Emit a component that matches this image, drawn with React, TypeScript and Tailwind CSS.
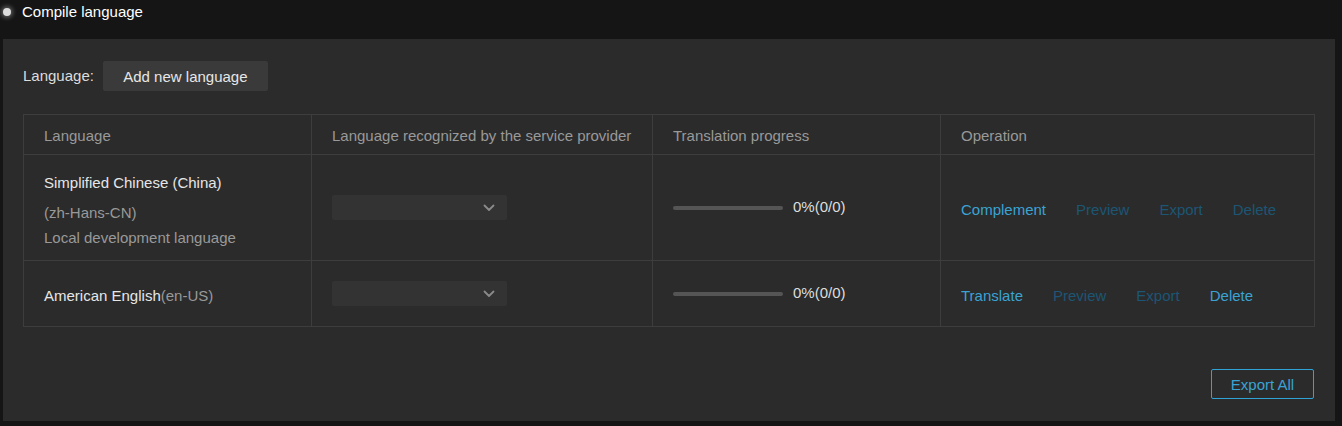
import React from "react";

const Chevron = () => (
  <svg width="12" height="8" viewBox="0 0 12 8" fill="none">
    <path d="M1.5 1.5 L6 6 L10.5 1.5" stroke="#8a8a8a" strokeWidth="1.8" strokeLinecap="round" strokeLinejoin="round" />
  </svg>
);

const Select = () => (
  <div className="w-[175px] h-[25px] bg-[#333333] rounded-[2px] flex items-center justify-end pr-[12px]">
    <Chevron />
  </div>
);

const Progress = () => (
  <div className="flex items-center">
    <div className="w-[110px] h-[4px] rounded-full bg-[#555555]" />
    <span className="ml-[10px] text-[#dddddd]">0%(0/0)</span>
  </div>
);

export default function App() {
  return (
    <div
      className="w-[1342px] h-[426px] bg-[#151515] text-[15px] overflow-hidden"
      style={{ fontFamily: '"Liberation Sans", Arial, sans-serif' }}
    >
      <div className="h-[39px] flex items-start pt-[3px] pl-[3px]">
        <div className="flex items-center h-[18px]">
          <div className="w-[8px] h-[8px] rounded-full bg-[#dcdcdc] shadow-[0_0_4px_2px_rgba(255,255,255,0.3)]" />
          <span className="ml-[11px] text-white text-[15px]">Compile language</span>
        </div>
      </div>
      <div className="ml-[3px] w-[1332px] h-[382px] bg-[#2b2b2b] pt-[22px] px-[20px]">
        <div className="flex items-center h-[30px]">
          <span className="text-[#dddddd]">Language:</span>
          <div className="ml-[9px] h-[30px] w-[165px] bg-[#3a3a3a] rounded-[2px] flex items-center justify-center text-[#e6e6e6] text-[15px] pt-[2px]">
            Add new language
          </div>
        </div>
        <table className="mt-[23px] w-[1291px] border-collapse border border-[#3d3d3d] table-fixed">
          <colgroup>
            <col className="w-[288px]" />
            <col className="w-[341px]" />
            <col className="w-[288px]" />
            <col className="w-[374px]" />
          </colgroup>
          <thead>
            <tr className="h-[40px] text-[#999999] text-left">
              <th className="font-normal px-[20px] pt-[4px] border border-[#3d3d3d]">Language</th>
              <th className="font-normal px-[20px] pt-[4px] border border-[#3d3d3d]">Language recognized by the service provider</th>
              <th className="font-normal px-[20px] pt-[4px] border border-[#3d3d3d]">Translation progress</th>
              <th className="font-normal px-[20px] pt-[4px] border border-[#3d3d3d]">Operation</th>
            </tr>
          </thead>
          <tbody>
            <tr className="h-[106px]">
              <td className="px-[20px] border border-[#3d3d3d] align-middle">
                <div className="flex flex-col mt-[6px]">
                  <span className="text-[#e6e6e6] leading-[18px]">Simplified Chinese (China)</span>
                  <span className="text-[#999999] leading-[18px] mt-[12px]">(zh-Hans-CN)</span>
                  <span className="text-[#999999] leading-[18px] mt-[7px]">Local development language</span>
                </div>
              </td>
              <td className="px-[20px] border border-[#3d3d3d]">
                <Select />
              </td>
              <td className="px-[20px] border border-[#3d3d3d]">
                <Progress />
              </td>
              <td className="px-[20px] border border-[#3d3d3d]">
                <div className="flex items-center gap-[30px] mt-[6px]">
                  <span className="text-[#3aa3d4]">Complement</span>
                  <span className="text-[#1c5674]">Preview</span>
                  <span className="text-[#1c5674]">Export</span>
                  <span className="text-[#1c5674]">Delete</span>
                </div>
              </td>
            </tr>
            <tr className="h-[66px]">
              <td className="px-[20px] border border-[#3d3d3d] pt-[5px]">
                <span className="text-[#e6e6e6]">American English</span>
                <span className="text-[#999999]">(en-US)</span>
              </td>
              <td className="px-[20px] border border-[#3d3d3d]">
                <Select />
              </td>
              <td className="px-[20px] border border-[#3d3d3d]">
                <Progress />
              </td>
              <td className="px-[20px] border border-[#3d3d3d]">
                <div className="flex items-center gap-[30px] mt-[5px]">
                  <span className="text-[#3aa3d4]">Translate</span>
                  <span className="text-[#1c5674]">Preview</span>
                  <span className="text-[#1c5674]">Export</span>
                  <span className="text-[#3aa3d4]">Delete</span>
                </div>
              </td>
            </tr>
          </tbody>
        </table>
        <div className="flex justify-end mt-[42px] w-[1291px]">
          <div className="w-[103px] h-[30px] border border-[#2fa3d6] rounded-[2px] flex items-center justify-center text-[#3aa3d4] text-[15px] pt-[3px]">
            Export All
          </div>
        </div>
      </div>
    </div>
  );
}
